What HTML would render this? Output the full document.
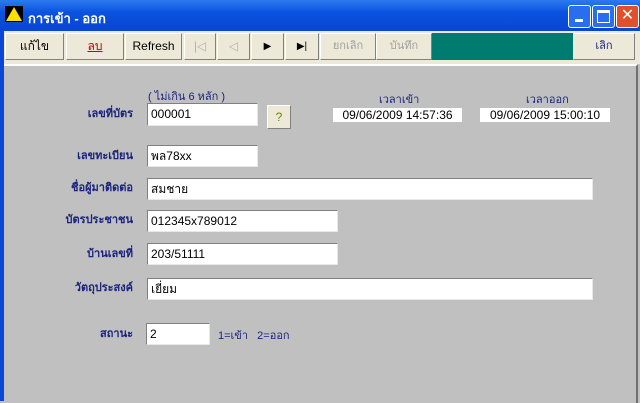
<html><head><style>
body{margin:0;width:640px;height:401px;overflow:hidden;background:#c0c0c0;font-family:"Liberation Sans","DejaVu Sans",sans-serif;position:relative}
.a{position:absolute}
.title{left:0;top:0;width:640px;height:31px;background:linear-gradient(#2d7af0,#0a52e0 40%,#0846d0);}
.tb{left:4px;top:31px;width:636px;height:33px;background:#ece9d8}
.btn{position:absolute;top:2px;height:27px;background:#ece9d8;border:1px solid;border-color:#fff #808080 #808080 #fff;box-sizing:border-box;font-size:12px;text-align:center;line-height:25px}
.cont{left:4px;top:64px;width:632px;height:337px;background:#c0c0c0;border-top:2px solid #fff;border-right:2px solid #707070}
.lbl{position:absolute;font-size:11px;color:#1a237e;text-align:right;width:120px;font-weight:bold}
.in{position:absolute;background:#fff;border:1px solid;border-color:#808080 #e8e8e8 #e8e8e8 #808080;box-sizing:border-box;font-size:12px;padding-left:3px;line-height:20px}
</style></head><body>
<div class="a" style="left:0;top:0;width:4px;height:401px;background:#0a46d8"></div>
<div class="a title"></div>
<div class="a" style="left:6px;top:7px;width:0;height:0;border-left:8px solid transparent;border-right:8px solid transparent;border-bottom:14px solid #ffe000;background:#000;box-shadow:0 0 0 1px #000"></div>
<div class="a" style="left:28px;top:8px;color:#fff;font-weight:bold;font-size:13px">การเข้า - ออก</div>
<div class="a" style="left:568px;top:5px;width:21px;height:21px;background:#2a6ef0;border:1px solid #fff;border-radius:3px"><div style="margin:13px 0 0 6px;width:8px;height:3px;background:#fff"></div></div>
<div class="a" style="left:592px;top:5px;width:21px;height:21px;background:#2a6ef0;border:1px solid #fff;border-radius:3px"><div style="margin:4px;width:11px;height:9px;border:1px solid #fff;border-top-width:3px"></div></div>
<div class="a" style="left:616px;top:5px;width:21px;height:21px;background:#e0502a;border:1px solid #fff;border-radius:3px;color:#fff;font-size:16px;text-align:center;line-height:20px;font-weight:bold">✕</div>
<div class="a tb">
<div class="btn" style="left:1px;width:59px">แก้ไข</div>
<div class="btn" style="left:62px;width:58px;color:#c00000;text-decoration:underline">ลบ</div>
<div class="btn" style="left:121px;width:57px">Refresh</div>
<div class="btn" style="left:180px;width:32px;color:#b0b0b0">|◁</div>
<div class="btn" style="left:213px;width:33px;color:#b0b0b0">◁</div>
<div class="btn" style="left:247px;width:33px;font-size:10px">▶</div>
<div class="btn" style="left:281px;width:34px;font-size:10px">▶|</div>
<div class="btn" style="left:316px;width:56px;color:#a0a0a0;font-size:11px">ยกเลิก</div>
<div class="btn" style="left:372px;width:56px;color:#a0a0a0;font-size:11px">บันทึก</div>
<div class="a" style="left:428px;top:2px;width:141px;height:27px;background:#007b70"></div>
<div class="btn" style="left:569px;width:62px;color:#1a237e;font-size:11px">เลิก</div>
</div>
<div class="a cont">
<div class="a" style="left:144px;top:21px;font-size:11px;color:#1a237e">( ไม่เกิน 6 หลัก )</div>
<div class="a" style="left:375px;top:24px;font-size:11px;color:#1a237e">เวลาเข้า</div>
<div class="a" style="left:522px;top:24px;font-size:11px;color:#1a237e">เวลาออก</div>
<div class="a" style="left:329px;top:42px;width:129px;height:14px;background:#fff;font-size:12px;text-align:center;line-height:14px">09/06/2009 14:57:36</div>
<div class="a" style="left:476px;top:42px;width:130px;height:14px;background:#fff;font-size:12px;text-align:center;line-height:14px">09/06/2009 15:00:10</div>
<div class="lbl" style="left:9px;top:38px">เลขที่บัตร</div>
<div class="in" style="left:143px;top:37px;width:111px;height:23px">000001</div>
<div class="btn" style="left:263px;top:39px;width:24px;height:24px;color:#6a8a00;line-height:22px">?</div>
<div class="lbl" style="left:9px;top:80px">เลขทะเบียน</div>
<div class="in" style="left:143px;top:79px;width:111px;height:22px">พล78xx</div>
<div class="lbl" style="left:9px;top:112px">ชื่อผู้มาติดต่อ</div>
<div class="in" style="left:143px;top:112px;width:446px;height:22px">สมชาย</div>
<div class="lbl" style="left:9px;top:144px">บัตรประชาชน</div>
<div class="in" style="left:143px;top:144px;width:191px;height:22px">012345x789012</div>
<div class="lbl" style="left:9px;top:178px">บ้านเลขที่</div>
<div class="in" style="left:143px;top:177px;width:191px;height:22px">203/51111</div>
<div class="lbl" style="left:9px;top:212px">วัตถุประสงค์</div>
<div class="in" style="left:143px;top:212px;width:446px;height:22px">เยี่ยม</div>
<div class="lbl" style="left:9px;top:258px">สถานะ</div>
<div class="in" style="left:142px;top:257px;width:64px;height:22px">2</div>
<div class="a" style="left:214px;top:260px;font-size:11px;color:#1a237e">1=เข้า&nbsp;&nbsp;&nbsp;2=ออก</div>
</div>
</body></html>
